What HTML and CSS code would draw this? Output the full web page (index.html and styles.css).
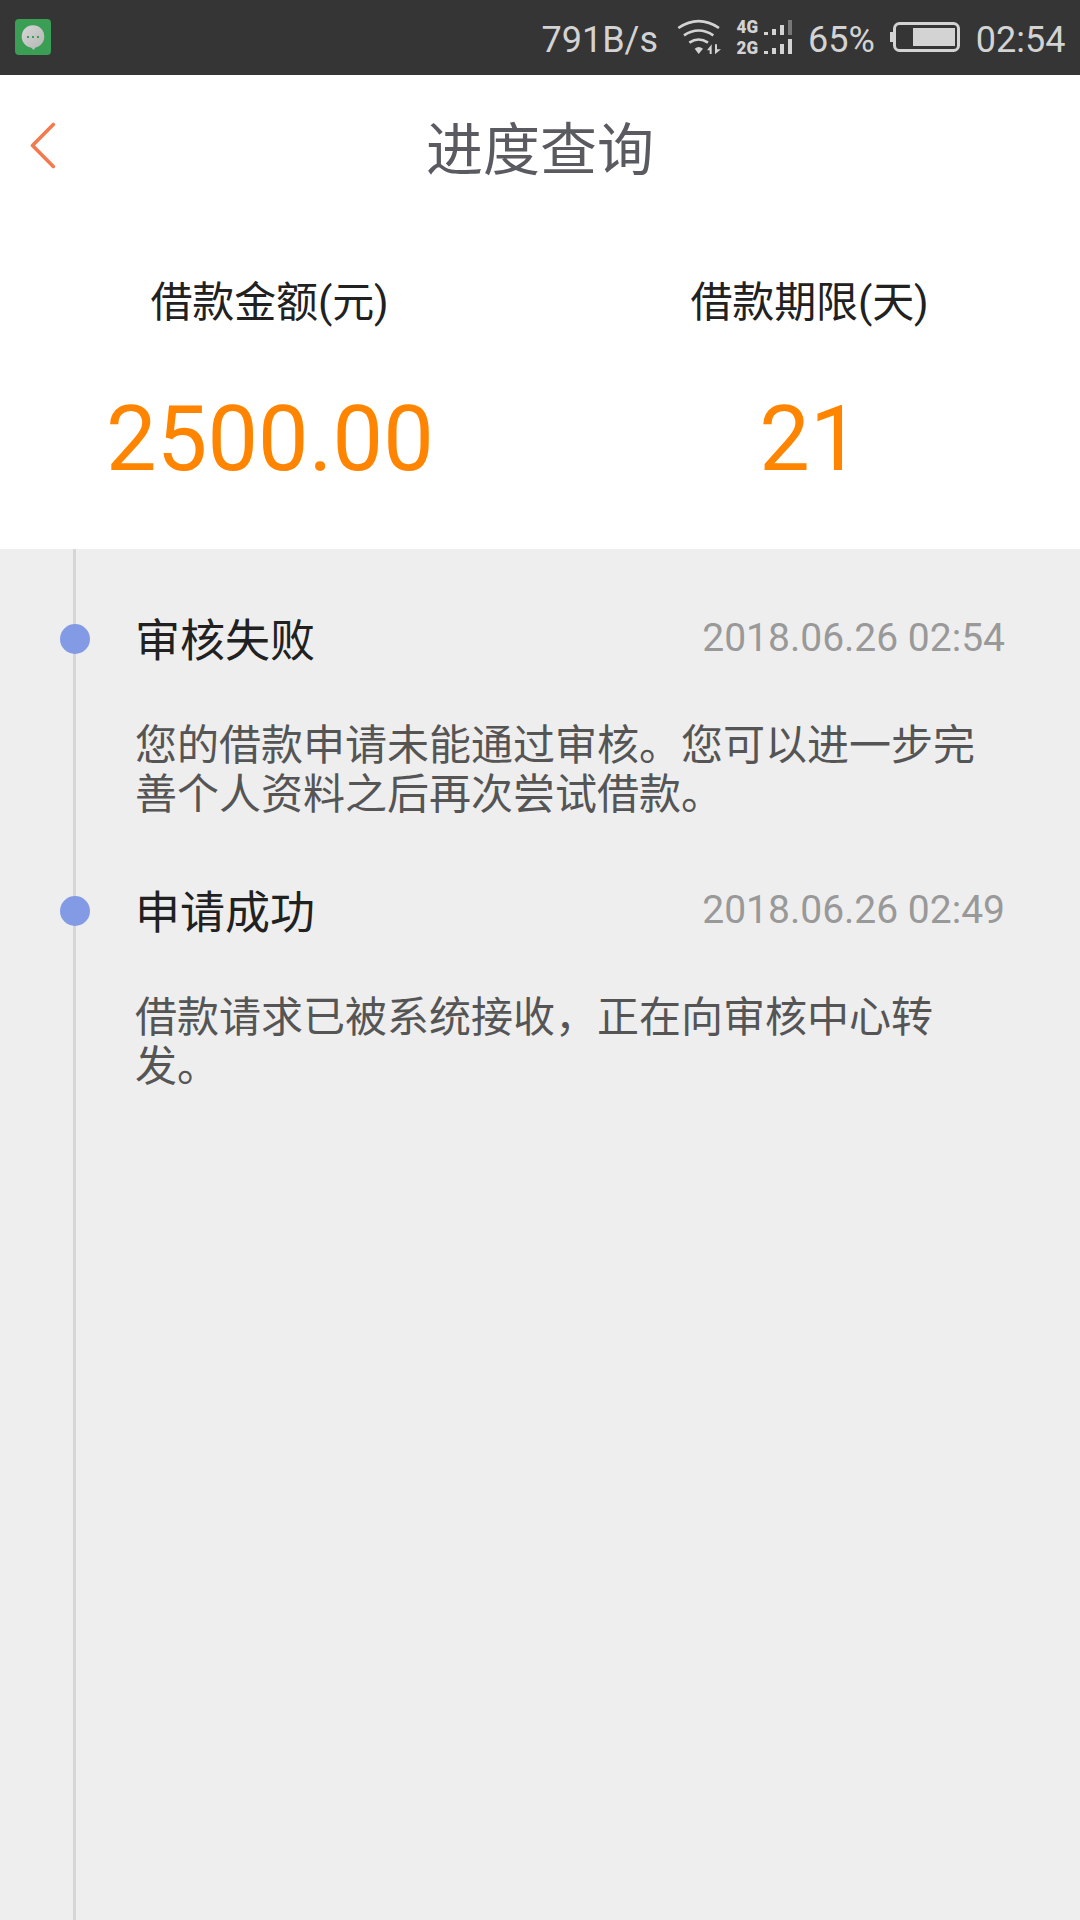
FILE: index.html
```html
<!DOCTYPE html>
<html lang="zh-CN">
<head>
<meta charset="utf-8">
<title>进度查询</title>
<link rel="stylesheet" href="styles.css">
</head>
<body>
<div class="status-bar">
  <svg class="app-icon" viewBox="0 0 36 36">
    <defs><linearGradient id="bubble" x1="0" y1="0" x2="1" y2="1"><stop offset="0" stop-color="#d6d6d6"/><stop offset="1" stop-color="#b4b8b5"/></linearGradient></defs>
    <rect width="36" height="36" rx="4" fill="#3a9e54"/>
    <circle cx="18" cy="17.500" r="11.300" fill="url(#bubble)"/>
    <path d="M15.500 28h5.500L18.500 31z" fill="#b9bdba"/>
    <path d="M12 17h2v2h-2zM17 17h2v2h-2zM22 17h2v2h-2z" fill="#3a9e54"/>
  </svg>
  <span class="speed">791B/s</span>
  <svg class="wifi" viewBox="441 54 135 114">
    <g fill="none" stroke="#d3d3d3" stroke-width="8">
      <path d="M445 84Q506 43 567 84"/>
      <path d="M462 106Q506 77 550 106"/>
      <path d="M478 128Q506 109 534 128"/>
    </g>
    <path d="M494 146Q506 136 519 146L506 162zM531 151L545 133V162H539V151zM555 133H561V148H573L555 163z" fill="#d3d3d3"/>
  </svg>
  <svg class="signal" viewBox="0 -4 56 46">
    <g class="net"><text x="-.5" y="15" textLength="21.500" lengthAdjust="spacingAndGlyphs">4G</text><text x="-.5" y="36" textLength="21.500" lengthAdjust="spacingAndGlyphs">2G</text></g>
    <path d="M27 14h4v3h-4zM35 11h4v6h-4zM43 7h4v10h-4zM27 33h4v3h-4zM35 30h4v6h-4zM43 26h4v10h-4zM51 21h4v15h-4z" fill="#d3d3d3"/>
    <path d="M51 2h4v15h-4z" fill="#777"/>
  </svg>
  <span class="percent">65%</span>
  <svg class="battery" viewBox="0 0 70 30">
    <rect x="4.500" y="1.500" width="64" height="27" rx="5" fill="none" stroke="#d3d3d3" stroke-width="3"/>
    <path d="M0 10h3.500v10H0zM23 6h42v18H23z" fill="#d3d3d3"/>
  </svg>
  <span class="clock">02:54</span>
</div>
<header class="header">
  <svg class="back" viewBox="0 0 26 48"><path d="M23.300 2.500L2.500 23.500L23.300 44.500" fill="none" stroke="#f27a4e" stroke-width="3.600" stroke-linecap="round" stroke-linejoin="round"/></svg>
  <h1 class="title">进度查询</h1>
</header>
<section class="summary">
  <div class="figure"><div class="label">借款金额(元)</div><div class="value">2500.00</div></div>
  <div class="figure"><div class="label">借款期限(天)</div><div class="value">21</div></div>
</section>
<main class="timeline">
  <article class="event">
    <span class="dot"></span>
    <div class="event-head"><h2 class="event-title">审核失败</h2><time class="event-time">2018.06.26 02:54</time></div>
    <p class="event-text">您的借款申请未能通过审核。您可以进一步完善个人资料之后再次尝试借款。</p>
  </article>
  <article class="event">
    <span class="dot"></span>
    <div class="event-head"><h2 class="event-title">申请成功</h2><time class="event-time">2018.06.26 02:49</time></div>
    <p class="event-text">借款请求已被系统接收，正在向审核中心转发。</p>
  </article>
</main>
</body>
</html>
```
FILE: styles.css
```css
* { box-sizing: border-box; }
body {
  margin: 0;
  min-height: 1920px;
  display: flex;
  flex-direction: column;
  background: #fff;
  font-family: Roboto, "Noto Sans CJK SC", sans-serif;
}
svg { display: block; flex: none; }
h1, h2, p { margin: 0; font-weight: 400; }

.status-bar {
  height: 75px;
  display: flex;
  align-items: flex-start;
  padding: 0 14.5px 0 15px;
  background: #353535;
  color: #d3d3d3;
  font-size: 36px;
  line-height: 80px;
}
.app-icon { width: 36px; height: 36px; margin-top: 19px; }
.speed { margin-left: auto; }
.wifi { width: 45px; height: 38px; margin: 18px 15px 0 19px; }
.signal { width: 56px; height: 46px; margin: 14px 15px 0 0; overflow: visible; }
.net { font: 900 18.5px Roboto, sans-serif; fill: #d3d3d3; }
.battery { width: 70px; height: 30px; margin: 22px 15.5px 0 15.5px; }

.header {
  height: 148px;
  display: grid;
  grid-template-columns: 57px 1fr 57px;
}
.back { width: 26px; height: 48px; margin: 47px 0 0 30px; }
.title {
  text-align: center;
  font-size: 57px;
  line-height: 152px;
  color: #595b61;
}

.summary {
  height: 326px;
  display: grid;
  grid-template-columns: 1fr 1fr;
  text-align: center;
}
.figure { padding-top: 50px; }
.label { font-size: 42px; line-height: 60px; letter-spacing: -.15px; margin-left: -1px; color: #212121; }
.value { margin-top: 57px; font-size: 90px; line-height: 100px; letter-spacing: .1px; color: #ff8500; }

.timeline {
  flex: 1;
  padding: 62px 75px 0 135px;
  background: linear-gradient(#d6d6d6, #d6d6d6) 73px 0 / 3px 100% no-repeat #eee;
}
.event { position: relative; height: 272px; }
.dot {
  position: absolute;
  left: -75px;
  top: 13px;
  width: 30px;
  height: 30px;
  border-radius: 50%;
  background: #839be5;
}
.event-head { display: flex; justify-content: space-between; }
.event-title { font-size: 45px; line-height: 62px; color: #212121; }
.event-time { font-size: 39px; line-height: 54px; color: #999; }
.event-text { margin-top: 48px; font-size: 42px; line-height: 49px; color: #555; }
```
